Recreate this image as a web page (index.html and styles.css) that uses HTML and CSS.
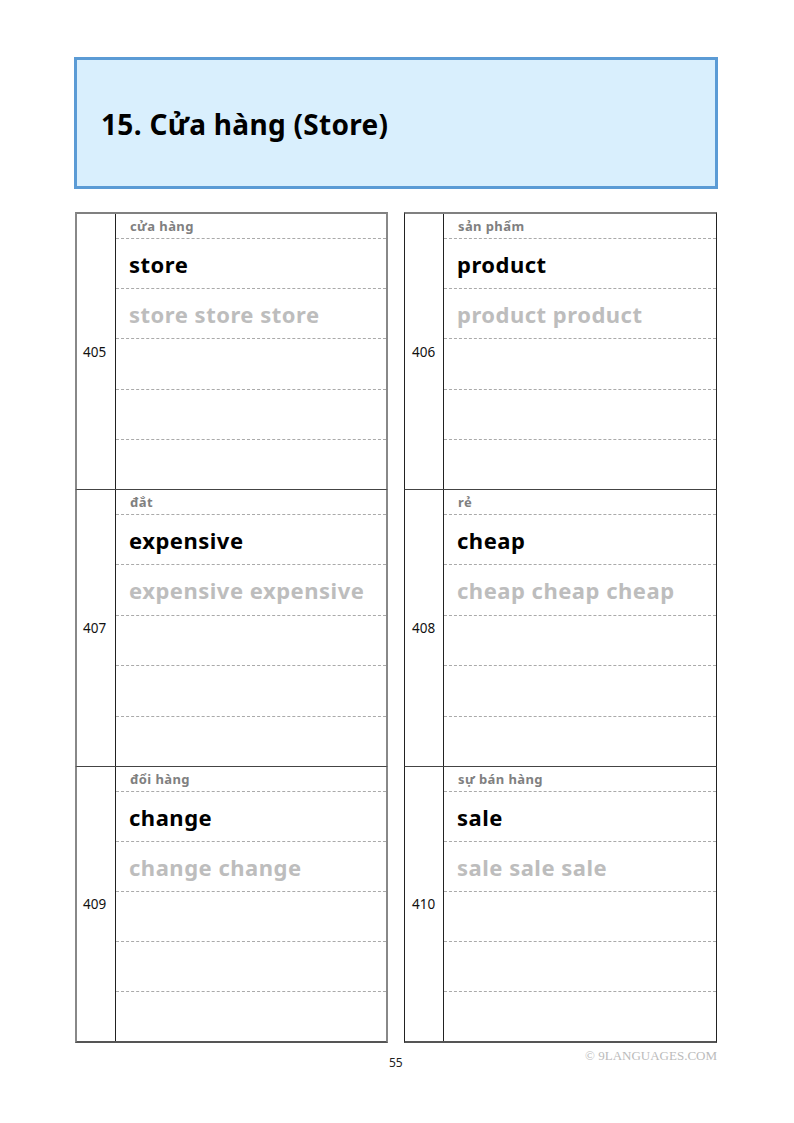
FILE: index.html
```html
<!DOCTYPE html>
<html lang="vi">
<head>
<meta charset="utf-8">
<title>15. Cửa hàng (Store)</title>
<link rel="stylesheet" href="styles.css">
</head>
<body>
<div class="page">
  <div class="header"><h1 class="title">15. Cửa hàng (Store)</h1></div>
  <div class="grid">
    <div class="card left">
      <div class="num">405</div>
      <div class="lines">
        <div class="label">cửa hàng</div>
        <div class="row word">store</div>
        <div class="row trace">store store store</div>
        <div class="row"></div><div class="row"></div><div class="row"></div>
      </div>
    </div>
    <div class="card right">
      <div class="num">406</div>
      <div class="lines">
        <div class="label">sản phẩm</div>
        <div class="row word">product</div>
        <div class="row trace">product product</div>
        <div class="row"></div><div class="row"></div><div class="row"></div>
      </div>
    </div>
    <div class="card left">
      <div class="num">407</div>
      <div class="lines">
        <div class="label">đắt</div>
        <div class="row word">expensive</div>
        <div class="row trace">expensive expensive</div>
        <div class="row"></div><div class="row"></div><div class="row"></div>
      </div>
    </div>
    <div class="card right">
      <div class="num">408</div>
      <div class="lines">
        <div class="label">rẻ</div>
        <div class="row word">cheap</div>
        <div class="row trace">cheap cheap cheap</div>
        <div class="row"></div><div class="row"></div><div class="row"></div>
      </div>
    </div>
    <div class="card left last">
      <div class="num">409</div>
      <div class="lines">
        <div class="label">đổi hàng</div>
        <div class="row word">change</div>
        <div class="row trace">change change</div>
        <div class="row"></div><div class="row"></div><div class="row"></div>
      </div>
    </div>
    <div class="card right last">
      <div class="num">410</div>
      <div class="lines">
        <div class="label">sự bán hàng</div>
        <div class="row word">sale</div>
        <div class="row trace">sale sale sale</div>
        <div class="row"></div><div class="row"></div><div class="row"></div>
      </div>
    </div>
  </div>
  <div class="footer">
    <span class="pageno">55</span>
    <span class="copy">© 9LANGUAGES.COM</span>
  </div>
</div>
</body>
</html>
```

FILE: styles.css
```css
html, body {
  margin: 0;
  padding: 0;
  background: #fff;
}
.page {
  width: 794px;
  height: 1123px;
  box-sizing: border-box;
  padding-top: 57px;
  font-family: "Noto Sans", "Open Sans", sans-serif;
  color: #000;
}
.header {
  margin-left: 74px;
  width: 644px;
  height: 132px;
  box-sizing: border-box;
  border: 3px solid #5b9bd5;
  background: #d9effd;
  display: flex;
  align-items: center;
  padding-left: 24px;
}
.title {
  margin: 0;
  font-size: 28px;
  font-weight: 700;
  letter-spacing: 0.3px;
  position: relative;
  top: 1px;
}
.grid {
  margin-top: 23px;
  margin-left: 75px;
  width: 642px;
  display: grid;
  grid-template-columns: 313px 313px;
  column-gap: 16px;
  grid-auto-rows: 277px;
}
.card {
  display: flex;
  box-sizing: border-box;
  border-top: 1px solid #444;
}
.card:nth-child(-n+2) {
  border-top: 2px solid #808080;
}
.card.left {
  border-left: 2px solid #888;
  border-right: 2px solid #888;
}
.card.right {
  border-left: 1px solid #222;
  border-right: 1px solid #222;
}
.card.last {
  border-bottom: 2px solid #555;
}
.num {
  width: 39px;
  flex: none;
  box-sizing: border-box;
  border-right: 1px solid #222;
  display: flex;
  align-items: center;
  padding-left: 6px;
  font-size: 13.5px;
  color: #111;
}
.card.right .num {
  padding-left: 7px;
}
.lines {
  flex: 1;
  display: flex;
  flex-direction: column;
}
.label {
  height: 25px;
  flex: none;
  box-sizing: border-box;
  border-bottom: 1px dashed #aaa;
  padding-left: 14px;
  font-size: 13px;
  font-weight: 700;
  letter-spacing: 0.4px;
  color: #808080;
  line-height: 25px;
}
.row {
  flex: 1;
  box-sizing: border-box;
  border-bottom: 1px dashed #aaa;
  padding-left: 13px;
  display: flex;
  align-items: center;
  font-size: 22px;
  font-weight: 700;
  letter-spacing: 0.5px;
}
.row:last-child {
  border-bottom: none;
}
.word {
  color: #000;
}
.trace {
  color: #bdbdbd;
}
.footer {
  margin-left: 75px;
  width: 642px;
  display: flex;
  justify-content: space-between;
  align-items: flex-start;
  height: 30px;
}
.pageno {
  margin-left: 314px;
  margin-top: 11px;
  font-size: 12px;
  color: #222;
}
.copy {
  margin-top: 5px;
  font-family: "Liberation Serif", "DejaVu Serif", serif;
  font-size: 13px;
  color: #bbb;
}
```
